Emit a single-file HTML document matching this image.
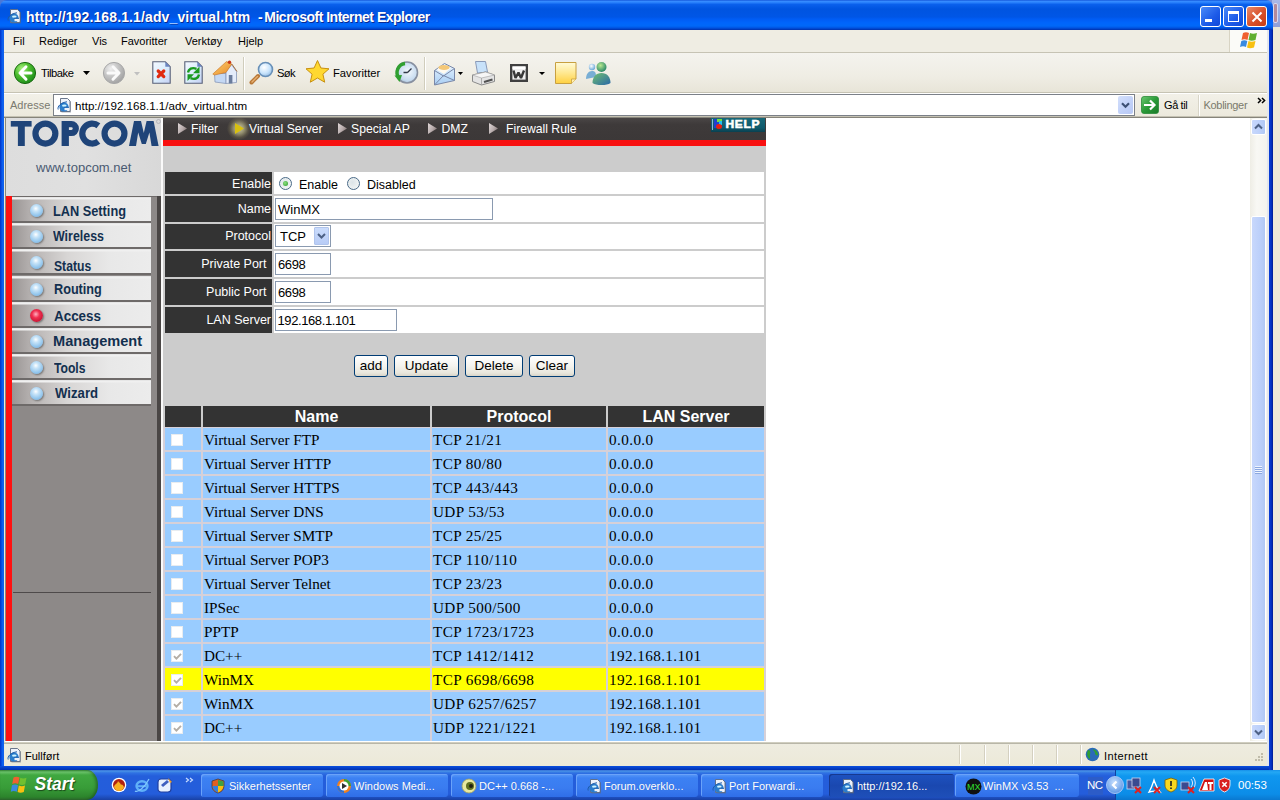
<!DOCTYPE html>
<html><head><meta charset="utf-8">
<style>
*{box-sizing:border-box}
html,body{margin:0;padding:0;width:1280px;height:800px;overflow:hidden;background:#ece9d8;font-family:"Liberation Sans",sans-serif}
.a{position:absolute}
.t{position:absolute;white-space:nowrap}

.d{font-family:"Liberation Serif",serif;font-size:15.2px;color:#000}
.mb{font-size:15.5px;line-height:16px;font-weight:bold;color:#13304f;transform-origin:0 0}
.nav{top:121.8px;font-size:12.2px;color:#fff}
.lab{left:165px;width:107px;background:#333;color:#fff;font-size:12.5px;text-align:right;padding-right:1px}
.cell{left:274px;width:490px;background:#fff}
.ft{font-size:12.5px;color:#000}
.it{font-size:13px;color:#000}
.inp{background:#fff;border:1px solid #8a9ab0}
.btn{height:22px;border:1px solid #003c74;border-radius:3px;background:linear-gradient(#fff,#f4f3ee 50%,#e8e6dc 85%,#d8d4c8);font-size:13.5px;text-align:center;line-height:20px;color:#000}
.th{height:21px;background:#333;color:#fff;font-weight:bold;font-size:16px;text-align:center;line-height:22px}
.sb{border:1px solid #fff;border-radius:2px;background:linear-gradient(90deg,#c8d8fc,#bcd0fa 60%,#b0c8f4)}
</style></head><body>
<!-- window sliver behind at right -->
<div class="a" style="left:0;top:0;width:12px;height:12px;background:#4a78d8"></div><div class="a" style="left:1262px;top:0;width:12px;height:12px;background:#7e90d8"></div>
<div class="a" style="left:1272px;top:0;width:8px;height:27px;background:linear-gradient(#aab8e8,#8f9fd8)"></div>
<div class="a" style="left:1273px;top:3px;width:5px;height:20px;background:#b48a9c;border-radius:2px;border:1px solid #d8d8f0"></div>
<div class="a" style="left:1272px;top:27px;width:8px;height:743px;background:#ece9d8"></div>

<!-- title bar -->
<div class="a" style="left:0;top:0;width:1273px;height:30px;border-radius:7px 7px 0 0;background:linear-gradient(#0846d0 0px,#3a8eff 1px,#3088ff 2px,#0a60ec 4.5px,#0054e0 9px,#0056e6 17px,#005cf4 19px,#0066fc 23px,#0068f8 26px,#0052e0 28px,#0038b8 29.5px,#0038b8 30px)"></div>
<!-- window frame -->
<div class="a" style="left:0;top:30px;width:4px;height:740px;background:linear-gradient(90deg,#0032c8,#0a5fef 60%,#1660e8)"></div>

<div class="a" style="left:0;top:766px;width:1273px;height:4px;background:linear-gradient(#0a50e0,#0030b0)"></div>


<div id="title">
<!-- IE page icon -->
<svg class="a" style="left:6px;top:8px" width="16" height="16" viewBox="0 0 16 16">
<path d="M5.5 2.5h7l2.5 2.5v10.5h-9.5z" fill="#606878" opacity=".5"/>
<path d="M4.5 1.5h7l2.5 2.5v10.5h-9.5z" fill="#eef2fa" stroke="#5a6880" stroke-width="0.9"/>
<circle cx="8" cy="10" r="4.6" fill="#2a7ccc"/>
<ellipse cx="8.3" cy="8.7" rx="2.3" ry="1.1" fill="#d0f4ff"/>
<path d="M8.5 10.6h5v2.6h-5z" fill="#eef2fa"/>
<path d="M8 10.3h5" stroke="#1a60b0" stroke-width="1"/>
<path d="M2.2 12.5C1 9.5 5 5.5 11 4.8" fill="none" stroke="#1a5aa8" stroke-width="1"/>
</svg>
<div class="t" style="left:26px;top:8.8px;font-size:14px;font-weight:bold;color:#fff;text-shadow:1px 1px 0 #0a2a90;letter-spacing:0.12px">http://192.168.1.1/adv_virtual.htm</div>
<div class="t" style="left:258px;top:8.8px;font-size:14px;font-weight:bold;color:#fff;text-shadow:1px 1px 0 #0a2a90">-</div>
<div class="t" style="left:264.3px;top:8.8px;font-size:14px;font-weight:bold;color:#fff;text-shadow:1px 1px 0 #0a2a90;letter-spacing:-0.5px">Microsoft Internet Explorer</div>
<!-- buttons -->
<div class="a" style="left:1200px;top:6px;width:21px;height:21px;border:1px solid #fff;border-radius:3px;background:linear-gradient(135deg,#4a8af8,#1c5ae8 60%,#1048d8)"><div class="a" style="left:4px;top:12px;width:7px;height:3px;background:#fff"></div></div>
<div class="a" style="left:1223px;top:6px;width:21px;height:21px;border:1px solid #fff;border-radius:3px;background:linear-gradient(135deg,#4a8af8,#1c5ae8 60%,#1048d8)"><div class="a" style="left:4px;top:4px;width:11px;height:11px;border:1px solid #fff;border-top-width:3px"></div></div>
<div class="a" style="left:1246px;top:6px;width:21px;height:21px;border:1px solid #fff;border-radius:3px;background:linear-gradient(135deg,#e88a6a,#d8502a 55%,#c83c14)">
<svg class="a" style="left:4px;top:4px" width="12" height="12"><path d="M1.5 1.5L10.5 10.5M10.5 1.5L1.5 10.5" stroke="#fff" stroke-width="2"/></svg></div>
</div>


<div id="menubar">
<div class="a" style="left:4px;top:30px;width:1264px;height:22px;background:#efede3"></div>
<div class="a" style="left:4px;top:52px;width:1264px;height:1px;background:#c6c3b4"></div>
<div class="a" style="left:1229px;top:30px;width:1px;height:22px;background:#d8d4c4"></div>
<div class="a" style="left:1230px;top:30px;width:38px;height:22px;background:#fbfbf8"></div>
<svg class="a" style="left:1239px;top:31px" width="22" height="19" viewBox="0 0 22 19">
<path d="M4 2c2-1 4-1 6 0l-1.5 7c-2-1-4-1-6 0z" fill="#f06030"/>
<path d="M11 2c2 1 4 1 7 0l-1.5 7c-3 1-5 1-7 0z" fill="#60b030"/>
<path d="M2.3 10c2-1 4-1 6 0L7 16c-2-1-4-1-6 0z" fill="#3a8ae0"/>
<path d="M9.5 10c2 1 4 1 7 0L15 16.5c-3 1-5 1-7 0z" fill="#f8c010"/>
</svg>
<div class="t" style="left:13px;top:34.5px;font-size:11px;color:#000">Fil</div>
<div class="t" style="left:39px;top:34.5px;font-size:11px;color:#000">Rediger</div>
<div class="t" style="left:92px;top:34.5px;font-size:11px;color:#000">Vis</div>
<div class="t" style="left:121px;top:34.5px;font-size:11px;color:#000">Favoritter</div>
<div class="t" style="left:185px;top:34.5px;font-size:11px;color:#000">Verktøy</div>
<div class="t" style="left:238px;top:34.5px;font-size:11px;color:#000">Hjelp</div>
</div>


<div id="toolbar">
<div class="a" style="left:4px;top:53px;width:1264px;height:39px;background:linear-gradient(#f4f3ee,#efede4 60%,#e8e5d8)"></div>
<div class="a" style="left:4px;top:92px;width:1264px;height:1px;background:#c6c3b4"></div>
<div class="a" style="left:4px;top:93px;width:1264px;height:1px;background:#fff"></div>
<!-- back -->
<svg class="a" style="left:12px;top:61px" width="26" height="25" viewBox="0 0 26 25">
<defs><radialGradient id="gb" cx="35%" cy="30%" r="75%"><stop offset="0" stop-color="#a8f080"/><stop offset="0.45" stop-color="#50c030"/><stop offset="1" stop-color="#1a8a18"/></radialGradient></defs>
<circle cx="13" cy="12" r="10.6" fill="url(#gb)" stroke="#1a6a10" stroke-width="1"/>
<path d="M14 5.8L8 12l6 6.2M8.5 12H19" fill="none" stroke="#fff" stroke-width="3" stroke-linecap="round" stroke-linejoin="round"/>
</svg>
<div class="t" style="left:41px;top:67px;font-size:11.2px;color:#000;letter-spacing:-0.45px">Tilbake</div>
<svg class="a" style="left:83px;top:71px" width="7" height="4"><path d="M0 0h7L3.5 4z" fill="#000"/></svg>
<!-- forward -->
<svg class="a" style="left:102px;top:61px" width="26" height="25" viewBox="0 0 26 25">
<defs><radialGradient id="gf" cx="35%" cy="30%" r="75%"><stop offset="0" stop-color="#f0f0f0"/><stop offset="0.5" stop-color="#c4c4c4"/><stop offset="1" stop-color="#a0a0a0"/></radialGradient></defs>
<circle cx="12" cy="12" r="10.6" fill="url(#gf)" stroke="#a8a8a8" stroke-width="1"/>
<path d="M11 5.8L17 12l-6 6.2M16.5 12H6" fill="none" stroke="#fafafa" stroke-width="3" stroke-linecap="round" stroke-linejoin="round"/>
</svg>
<svg class="a" style="left:134px;top:72px" width="6" height="4"><path d="M0 0h6L3 3.5z" fill="#c0c0c0"/></svg>
<!-- stop -->
<svg class="a" style="left:151px;top:60px" width="21" height="25" viewBox="0 0 21 25">
<defs><linearGradient id="pg" x1="0" y1="0" x2="1" y2="1"><stop offset="0" stop-color="#f4f8ff"/><stop offset="0.5" stop-color="#dceefc"/><stop offset="1" stop-color="#c4d0f4"/></linearGradient></defs>
<path d="M1.8 1.8h12.5l4.9 4.9v16.5H1.8z" fill="url(#pg)" stroke="#586078" stroke-width="1.1"/>
<path d="M14.3 1.8l4.9 4.9h-4.9z" fill="#6a84c0"/>
<path d="M7.2 11l5.6 5.6M12.8 11l-5.6 5.6" stroke="#e02a10" stroke-width="3.2" stroke-linecap="round"/>
</svg>
<!-- refresh -->
<svg class="a" style="left:183px;top:60px" width="21" height="25" viewBox="0 0 21 25">
<path d="M1.8 1.8h12.5l4.9 4.9v16.5H1.8z" fill="url(#pg)" stroke="#586078" stroke-width="1.1"/>
<path d="M14.3 1.8l4.9 4.9h-4.9z" fill="#6a84c0"/>
<path d="M5 12.5C5.5 9 9 7 13.5 8.8" fill="none" stroke="#1a9a20" stroke-width="2.4"/><path d="M16.5 6.5v6.8h-6.5z" fill="#1a9a20"/>
<path d="M16 14.5c-.5 3.5-4 5.5-8.5 3.7" fill="none" stroke="#1a9a20" stroke-width="2.4"/><path d="M4.5 21v-6.8H11z" fill="#1a9a20"/>
</svg>
<!-- home -->
<svg class="a" style="left:212px;top:59px" width="26" height="26" viewBox="0 0 26 26">
<defs><linearGradient id="rf" x1="0" y1="0" x2="1" y2="1"><stop offset="0" stop-color="#fcd070"/><stop offset="1" stop-color="#e88a28"/></linearGradient></defs>
<path d="M2.5 14.5L14 14.5L14 24.5L3 23z" fill="#c4d8f4" stroke="#8898b8" stroke-width="0.8"/>
<path d="M14 24.5V12.5L19.5 5.5 24.5 12.5V23.5z" fill="#e4ecfa" stroke="#8898b8" stroke-width="0.8"/>
<path d="M0.8 15L14.5 2.5 19.8 5 14 13.5 2.5 16z" fill="url(#rf)" stroke="#c87020" stroke-width="0.6"/>
<path d="M19.8 5L25 12.5" stroke="#a87040" stroke-width="1"/>
<rect x="16.8" y="16" width="3.6" height="8.5" fill="#6a7c9c"/>
<circle cx="17.5" cy="3.2" r="1.7" fill="#c83818"/>
</svg>
<div class="a" style="left:243px;top:57px;width:1px;height:33px;background:#d0cdbc"></div>
<div class="a" style="left:244px;top:57px;width:1px;height:33px;background:#fff"></div>
<!-- search -->
<svg class="a" style="left:248px;top:60px" width="26" height="26" viewBox="0 0 26 26">
<defs><radialGradient id="ls" cx="40%" cy="35%" r="70%"><stop offset="0" stop-color="#ffffff"/><stop offset="0.6" stop-color="#c8e4fc"/><stop offset="1" stop-color="#90b8e0"/></radialGradient></defs>
<path d="M10 16L3.5 22.5" stroke="#b87838" stroke-width="4" stroke-linecap="round"/>
<path d="M9.5 16.5L4 22" stroke="#e8b070" stroke-width="1.4" stroke-linecap="round"/>
<circle cx="17.5" cy="9.5" r="7" fill="url(#ls)" stroke="#6890b8" stroke-width="1.6"/>
</svg>
<div class="t" style="left:277px;top:67px;font-size:11.2px;color:#000;letter-spacing:-0.6px">Søk</div>
<!-- star -->
<svg class="a" style="left:304px;top:59px" width="27" height="27" viewBox="0 0 27 27">
<path d="M13.5 1.5l3.4 7.5 8.1.8-6.1 5.4 1.8 8-7.2-4.2-7.2 4.2 1.8-8-6.1-5.4 8.1-.8z" fill="#ffd830" stroke="#c89010" stroke-width="1"/>
</svg>
<div class="t" style="left:333px;top:67px;font-size:11.2px;color:#000">Favoritter</div>
<!-- history -->
<svg class="a" style="left:393px;top:60px" width="26" height="26" viewBox="0 0 26 26">
<defs><radialGradient id="gh" cx="55%" cy="45%" r="60%"><stop offset="0" stop-color="#f4f8fc"/><stop offset="0.7" stop-color="#c8dcf0"/><stop offset="1" stop-color="#a0b8d0"/></radialGradient></defs>
<circle cx="14" cy="12.5" r="10.5" fill="url(#gh)" stroke="#8890a0" stroke-width="1.6"/>
<path d="M14.5 12.5l4-4M14.5 12.5h-4" stroke="#303848" stroke-width="1.3"/>
<path d="M12 3.5A9 9 0 0 0 6 18" fill="none" stroke="#30a030" stroke-width="3.4"/>
<path d="M1.5 15.5L9 15l-2.5 7z" fill="#30a030"/>
</svg>
<div class="a" style="left:424px;top:57px;width:1px;height:33px;background:#d0cdbc"></div>
<div class="a" style="left:425px;top:57px;width:1px;height:33px;background:#fff"></div>
<!-- mail -->
<svg class="a" style="left:433px;top:61px" width="24" height="25" viewBox="0 0 24 25">
<defs><linearGradient id="mg" x1="0" y1="0" x2="0" y2="1"><stop offset="0" stop-color="#e8f4ff"/><stop offset="1" stop-color="#a8cef4"/></linearGradient></defs>
<path d="M1.5 9.5L11.5 2.5 21.5 7.5V19.5L1.5 24z" fill="url(#mg)" stroke="#7a88a8" stroke-width="1"/>
<path d="M4 9C6 4 13 3 18 7L11 13z" fill="#fffaf0"/>
<ellipse cx="11" cy="6.5" rx="5.5" ry="2.6" fill="#f4c878"/>
<path d="M1.5 24L10.5 14.5 21.5 19.5M1.5 9.5L10.5 15 21.5 7.5" fill="none" stroke="#7a88a8" stroke-width="1"/>
</svg>
<svg class="a" style="left:458px;top:72px" width="5" height="3"><path d="M0 0h5L2.5 3z" fill="#000"/></svg>
<!-- print -->
<svg class="a" style="left:471px;top:60px" width="25" height="26" viewBox="0 0 25 26">
<path d="M4.5 1.5h10l2 10.5-10 1z" fill="#c8e2fa" stroke="#8a9ab8" stroke-width="1"/>
<path d="M1.5 15L14.5 12 23.5 15V21.5L10.5 25 1.5 21.5z" fill="#e4e4e4" stroke="#8a8a8a" stroke-width="1"/>
<path d="M1.5 15L14.5 12 23.5 15 10.5 18z" fill="#f6f6f6" stroke="#a0a0a0" stroke-width="0.6"/>
<path d="M10.5 18V25" stroke="#a0a0a0" stroke-width="0.8"/>
<path d="M13 22L21.5 19.5" stroke="#505050" stroke-width="2"/>
</svg>
<!-- word -->
<svg class="a" style="left:510px;top:64px" width="18" height="18" viewBox="0 0 18 18">
<rect x="1.2" y="1.2" width="15.6" height="15.6" fill="#f0f0f0" stroke="#404040" stroke-width="2.4"/>
<rect x="2.5" y="2.5" width="13" height="2.5" fill="#fff"/>
<path d="M3.5 6.5l2 7.5 3-5.5 2.5 5.5 3-7.5" fill="none" stroke="#383838" stroke-width="2.4" stroke-linejoin="bevel"/>
</svg>
<svg class="a" style="left:539px;top:72px" width="6" height="3"><path d="M0 0h6L3 3z" fill="#000"/></svg>
<!-- note -->
<svg class="a" style="left:554px;top:61px" width="24" height="24" viewBox="0 0 24 24">
<defs><linearGradient id="ng" x1="0" y1="0" x2="0" y2="1"><stop offset="0" stop-color="#fffbd8"/><stop offset="0.5" stop-color="#ffe890"/><stop offset="1" stop-color="#ffd040"/></linearGradient></defs>
<path d="M1.5 1.5h20.5v16.5l-4.5 4.5H1.5z" fill="url(#ng)" stroke="#c8a040" stroke-width="1"/>
<path d="M17.5 22.5v-4.5h4.5" fill="#fff0b0" stroke="#c8a040" stroke-width="0.8"/>
</svg>
<!-- messenger -->
<svg class="a" style="left:585px;top:60px" width="27" height="26" viewBox="0 0 27 26">
<defs><radialGradient id="mh1" cx="40%" cy="35%" r="65%"><stop offset="0" stop-color="#ffffff"/><stop offset="1" stop-color="#6aa8d8"/></radialGradient>
<radialGradient id="mh2" cx="40%" cy="35%" r="65%"><stop offset="0" stop-color="#b8e890"/><stop offset="1" stop-color="#2a8868"/></radialGradient>
<linearGradient id="mb2" x1="0" y1="0" x2="1" y2="1"><stop offset="0" stop-color="#70c070"/><stop offset="1" stop-color="#2a68a8"/></linearGradient></defs>
<circle cx="7" cy="7" r="3.2" fill="url(#mh1)"/>
<path d="M1 19c0-5 2.5-8 6-8s4 2 4 6z" fill="#78aed4"/>
<circle cx="16.5" cy="7" r="5" fill="url(#mh2)"/>
<path d="M7.5 23c0-6 3.5-10 9-10s9 4 9 10c-2 1.5-5 2-9 2s-7-.5-9-2z" fill="url(#mb2)"/>
</svg>
</div>


<div id="addr">
<div class="a" style="left:4px;top:94px;width:1264px;height:23px;background:linear-gradient(#f2f0e8,#ece9dc)"></div>
<div class="t" style="left:10px;top:99px;font-size:11px;color:#7a7a70">Adresse</div>
<div class="a" style="left:53px;top:94px;width:1082px;height:22px;background:#fff;border:1px solid #7b8088"></div>
<svg class="a" style="left:56px;top:97px" width="16" height="16" viewBox="0 0 16 16">
<path d="M5.5 2.5h7l2.5 2.5v10.5h-9.5z" fill="#606878" opacity=".5"/>
<path d="M4.5 1.5h7l2.5 2.5v10.5h-9.5z" fill="#eef2fa" stroke="#5a6880" stroke-width="0.9"/>
<circle cx="8" cy="10" r="4.6" fill="#2a7ccc"/>
<ellipse cx="8.3" cy="8.7" rx="2.3" ry="1.1" fill="#d0f4ff"/>
<path d="M8.5 10.6h5v2.6h-5z" fill="#eef2fa"/>
<path d="M8 10.3h5" stroke="#1a60b0" stroke-width="1"/>
<path d="M2.2 12.5C1 9.5 5 5.5 11 4.8" fill="none" stroke="#1a5aa8" stroke-width="1"/>
</svg>
<div class="t" style="left:75px;top:99px;font-size:11.6px;color:#000">http://192.168.1.1/adv_virtual.htm</div>
<div class="a" style="left:1118px;top:96px;width:15px;height:18px;border-radius:2px;background:linear-gradient(135deg,#d4e0fc,#c0d0f8 60%,#b8c8f4)"></div>
<svg class="a" style="left:1121px;top:102px" width="9" height="7"><path d="M1 1.2l3.5 3.5L8 1.2" fill="none" stroke="#3d5075" stroke-width="2.2"/></svg>
<!-- go -->
<svg class="a" style="left:1141px;top:96px" width="18" height="18" viewBox="0 0 18 18">
<defs><linearGradient id="gg" x1="0" y1="0" x2="1" y2="1"><stop offset="0" stop-color="#6ac870"/><stop offset="0.5" stop-color="#2a9a38"/><stop offset="1" stop-color="#1a7a28"/></linearGradient></defs>
<rect x="0.5" y="0.5" width="17" height="17" rx="2.5" fill="url(#gg)" stroke="#2a8a38" stroke-width="0.8"/>
<path d="M3 9h10M9 4.5L13.5 9 9 13.5" fill="none" stroke="#fff" stroke-width="2.2"/>
</svg>
<div class="t" style="left:1164px;top:98.5px;font-size:11px;color:#000;letter-spacing:-0.4px">Gå til</div>
<div class="a" style="left:1198px;top:95px;width:1px;height:21px;background:#d8d5c8"></div>
<div class="a" style="left:1199px;top:95px;width:1px;height:21px;background:#fff"></div>
<div class="t" style="left:1203.5px;top:98.5px;font-size:11px;color:#7a7a6c;letter-spacing:-0.3px">Koblinger</div>
<svg class="a" style="left:1257px;top:97px" width="9" height="7"><path d="M1 1l2.6 2.5L1 6M5 1l2.6 2.5L5 6" fill="none" stroke="#000" stroke-width="1.5"/></svg>
</div>


<div id="content">
<div class="a" style="left:4px;top:116px;width:1264px;height:1px;background:#c4c1b2"></div><div class="a" style="left:4px;top:117px;width:1264px;height:1px;background:#86847a"></div>
<div class="a" style="left:5px;top:117px;width:1px;height:625px;background:#8a887c"></div>
<div class="a" style="left:6px;top:118px;width:1244px;height:623px;background:#fff"></div>
<div class="a" style="left:5px;top:741px;width:1263px;height:1px;background:#fff"></div>
<!-- left panel -->
<div class="a" style="left:6px;top:118px;width:157px;height:78px;background:linear-gradient(90deg,#dddddd,#e0e0e0 50%,#d8d8d8)"></div>
<svg class="a" style="left:0;top:116px" width="166" height="36" viewBox="0 0 166 36">
<g fill="#1f4479">
<rect x="10.8" y="5" width="20.8" height="5.6"/><rect x="17.9" y="5" width="6.9" height="25"/>
<rect x="61.6" y="5" width="7.3" height="25"/>
<path d="M129,30 L134,5 L141,5 L143.8,17 L146.6,5 L153.6,5 L158.6,30 L151.6,30 L149.4,16.5 L145.8,28 L141.8,28 L138.2,16.5 L136,30 Z"/>
</g>
<g fill="none" stroke="#1f4479" stroke-width="6.2">
<circle cx="45.4" cy="17.6" r="9.95"/>
<circle cx="114.5" cy="17.6" r="9.95"/>
<path d="M65,8.1 H71.4 A4.45,4.45 0 0 1 71.4,17 H65"/>
<path d="M98.4,9.8 A9.95,9.95 0 1 0 98.4,25.4"/>
</g>
<circle cx="158.5" cy="5.5" r="2" fill="none" stroke="#a8a8b0" stroke-width="0.7"/>
</svg>
<div class="t" style="left:36px;top:160px;font-size:13px;color:#4a5a72">www.topcom.net</div>
<div class="a" style="left:6px;top:196px;width:157px;height:545px;background:#8d8988"></div>
<div class="a" style="left:6px;top:196px;width:6px;height:545px;background:#ff1010"></div>
<div class="a" style="left:12px;top:196px;width:145px;height:1px;background:#6e6a69"></div>
<div class="a" style="left:157px;top:196px;width:4px;height:545px;background:#4a4645"></div>
<div class="a" style="left:161px;top:118px;width:2px;height:623px;background:#fafafa"></div>
<div class="a" style="left:13px;top:591.5px;width:138px;height:1.5px;background:#4e4a4a"></div>
<div class="a" style="left:12px;top:197.0px;width:139px;height:26px;background:linear-gradient(#dcdcdc 0,#f0f0f0 1px,#f0f0f0 2px,rgba(0,0,0,0) 3px),linear-gradient(90deg,#9a9594 0,#b8b4b3 15%,#d8d6d5 40%,#e8e8e8 70%,#ececec 100%);border-bottom:2px solid #6e6a69"></div>
<div class="a" style="left:30px;top:204.0px;width:13px;height:13px;border-radius:50%;background:radial-gradient(circle at 45% 35%,#ffffff 0,#c8e4f8 25%,#90c4ec 65%,#6aa0d0 100%);box-shadow:1px 1px 2px rgba(60,60,60,.6)"></div>
<div class="t mb" style="left:53.0px;top:202.6px;transform:scaleX(0.823)">LAN Setting</div>
<div class="a" style="left:12px;top:223.2px;width:139px;height:26px;background:linear-gradient(#dcdcdc 0,#f0f0f0 1px,#f0f0f0 2px,rgba(0,0,0,0) 3px),linear-gradient(90deg,#9a9594 0,#b8b4b3 15%,#d8d6d5 40%,#e8e8e8 70%,#ececec 100%);border-bottom:2px solid #6e6a69"></div>
<div class="a" style="left:30px;top:230.2px;width:13px;height:13px;border-radius:50%;background:radial-gradient(circle at 45% 35%,#ffffff 0,#c8e4f8 25%,#90c4ec 65%,#6aa0d0 100%);box-shadow:1px 1px 2px rgba(60,60,60,.6)"></div>
<div class="t mb" style="left:52.6px;top:228.2px;transform:scaleX(0.802)">Wireless</div>
<div class="a" style="left:12px;top:249.4px;width:139px;height:26px;background:linear-gradient(#dcdcdc 0,#f0f0f0 1px,#f0f0f0 2px,rgba(0,0,0,0) 3px),linear-gradient(90deg,#9a9594 0,#b8b4b3 15%,#d8d6d5 40%,#e8e8e8 70%,#ececec 100%);border-bottom:2px solid #6e6a69"></div>
<div class="a" style="left:30px;top:256.4px;width:13px;height:13px;border-radius:50%;background:radial-gradient(circle at 45% 35%,#ffffff 0,#c8e4f8 25%,#90c4ec 65%,#6aa0d0 100%);box-shadow:1px 1px 2px rgba(60,60,60,.6)"></div>
<div class="t mb" style="left:53.7px;top:257.5px;transform:scaleX(0.785)">Status</div>
<div class="a" style="left:12px;top:275.6px;width:139px;height:26px;background:linear-gradient(#dcdcdc 0,#f0f0f0 1px,#f0f0f0 2px,rgba(0,0,0,0) 3px),linear-gradient(90deg,#9a9594 0,#b8b4b3 15%,#d8d6d5 40%,#e8e8e8 70%,#ececec 100%);border-bottom:2px solid #6e6a69"></div>
<div class="a" style="left:30px;top:282.6px;width:13px;height:13px;border-radius:50%;background:radial-gradient(circle at 45% 35%,#ffffff 0,#c8e4f8 25%,#90c4ec 65%,#6aa0d0 100%);box-shadow:1px 1px 2px rgba(60,60,60,.6)"></div>
<div class="t mb" style="left:53.7px;top:281.3px;transform:scaleX(0.817)">Routing</div>
<div class="a" style="left:12px;top:301.8px;width:139px;height:26px;background:linear-gradient(#dcdcdc 0,#f0f0f0 1px,#f0f0f0 2px,rgba(0,0,0,0) 3px),linear-gradient(90deg,#9a9594 0,#b8b4b3 15%,#d8d6d5 40%,#e8e8e8 70%,#ececec 100%);border-bottom:2px solid #6e6a69"></div>
<div class="a" style="left:30px;top:308.8px;width:13px;height:13px;border-radius:50%;background:radial-gradient(circle at 45% 40%,#ffb0c0 0,#f03050 35%,#c01030 80%,#a01020 100%);box-shadow:1px 1px 2px rgba(60,60,60,.6)"></div>
<div class="t mb" style="left:54.1px;top:308.3px;transform:scaleX(0.866)">Access</div>
<div class="a" style="left:12px;top:328.0px;width:139px;height:26px;background:linear-gradient(#dcdcdc 0,#f0f0f0 1px,#f0f0f0 2px,rgba(0,0,0,0) 3px),linear-gradient(90deg,#9a9594 0,#b8b4b3 15%,#d8d6d5 40%,#e8e8e8 70%,#ececec 100%);border-bottom:2px solid #6e6a69"></div>
<div class="a" style="left:30px;top:335.0px;width:13px;height:13px;border-radius:50%;background:radial-gradient(circle at 45% 35%,#ffffff 0,#c8e4f8 25%,#90c4ec 65%,#6aa0d0 100%);box-shadow:1px 1px 2px rgba(60,60,60,.6)"></div>
<div class="t mb" style="left:53.3px;top:333.2px;transform:scaleX(0.940)">Management</div>
<div class="a" style="left:12px;top:354.2px;width:139px;height:26px;background:linear-gradient(#dcdcdc 0,#f0f0f0 1px,#f0f0f0 2px,rgba(0,0,0,0) 3px),linear-gradient(90deg,#9a9594 0,#b8b4b3 15%,#d8d6d5 40%,#e8e8e8 70%,#ececec 100%);border-bottom:2px solid #6e6a69"></div>
<div class="a" style="left:30px;top:361.2px;width:13px;height:13px;border-radius:50%;background:radial-gradient(circle at 45% 35%,#ffffff 0,#c8e4f8 25%,#90c4ec 65%,#6aa0d0 100%);box-shadow:1px 1px 2px rgba(60,60,60,.6)"></div>
<div class="t mb" style="left:53.7px;top:360.1px;transform:scaleX(0.784)">Tools</div>
<div class="a" style="left:12px;top:380.4px;width:139px;height:26px;background:linear-gradient(#dcdcdc 0,#f0f0f0 1px,#f0f0f0 2px,rgba(0,0,0,0) 3px),linear-gradient(90deg,#9a9594 0,#b8b4b3 15%,#d8d6d5 40%,#e8e8e8 70%,#ececec 100%);border-bottom:2px solid #6e6a69"></div>
<div class="a" style="left:30px;top:387.4px;width:13px;height:13px;border-radius:50%;background:radial-gradient(circle at 45% 35%,#ffffff 0,#c8e4f8 25%,#90c4ec 65%,#6aa0d0 100%);box-shadow:1px 1px 2px rgba(60,60,60,.6)"></div>
<div class="t mb" style="left:54.8px;top:385.0px;transform:scaleX(0.850)">Wizard</div>

<!-- main area -->
<div class="a" style="left:163px;top:118px;width:603px;height:623px;background:#cccccc"></div>
<div class="a" style="left:163px;top:118px;width:603px;height:22px;background:linear-gradient(#4a4646,#3e3a3a 30%,#3c3838)"></div>
<div class="a" style="left:163px;top:140px;width:603px;height:6px;background:#f81010"></div>

<svg class="a" style="left:177px;top:122px" width="11" height="13"><defs><linearGradient id="tg" x1="0" y1="0" x2="1" y2="0.6"><stop offset="0" stop-color="#e0d8d8"/><stop offset="0.6" stop-color="#b8acac"/><stop offset="1" stop-color="#8a7c7c"/></linearGradient></defs><path d="M1 1l9 5.5L1 12z" fill="url(#tg)"/></svg>
<div class="t nav" style="left:191px">Filter</div>
<div class="a" style="left:227px;top:117px;width:24px;height:23px;border-radius:50%;background:radial-gradient(ellipse at 50% 50%,rgba(255,255,210,.75) 0,rgba(240,235,170,.5) 30%,rgba(160,150,100,.25) 55%,rgba(60,60,60,0) 72%)"></div>
<svg class="a" style="left:234px;top:122px" width="11" height="13"><path d="M1 1l9 5.5L1 12z" fill="#d8c010"/></svg>
<div class="t nav" style="left:249px">Virtual Server</div>
<svg class="a" style="left:337px;top:122px" width="11" height="13"><path d="M1 1l9 5.5L1 12z" fill="url(#tg)"/></svg>
<div class="t nav" style="left:351px">Special AP</div>
<svg class="a" style="left:427px;top:122px" width="11" height="13"><path d="M1 1l9 5.5L1 12z" fill="url(#tg)"/></svg>
<div class="t nav" style="left:441.5px">DMZ</div>
<svg class="a" style="left:488px;top:122px" width="11" height="13"><path d="M1 1l9 5.5L1 12z" fill="url(#tg)"/></svg>
<div class="t nav" style="left:506px">Firewall Rule</div>
<div class="a" style="left:711px;top:118px;width:54px;height:14px;background:linear-gradient(#186878,#0e5a6c 70%,#0a4050)"></div>
<div class="a" style="left:712px;top:119px;width:1px;height:11px;background:#8ab8d8"></div>
<div class="a" style="left:714px;top:119px;width:6px;height:9px;background:#2040d0"></div>
<div class="a" style="left:717px;top:118.5px;width:5px;height:3px;background:#70e040"></div>
<div class="a" style="left:719px;top:121px;width:3px;height:4px;background:#20c0f0"></div>
<div class="a" style="left:716px;top:124px;width:6px;height:5px;border-radius:50%;background:#e82010"></div>
<div class="t" style="left:725.5px;top:117.2px;font-size:12px;font-weight:bold;color:#fff;letter-spacing:0.7px;-webkit-text-stroke:0.6px #fff;transform:scaleY(0.95)">HELP</div>

<!-- form -->
<div class="a lab" style="top:172px;height:22px;line-height:24px">Enable</div>
<div class="a cell" style="top:172px;height:22px"></div>
<div class="a lab" style="top:196px;height:26px;line-height:26px">Name</div>
<div class="a cell" style="top:196px;height:26px"></div>
<div class="a lab" style="top:224px;height:25px;line-height:25px">Protocol</div>
<div class="a cell" style="top:224px;height:25px"></div>
<div class="a lab" style="top:251px;height:26px;line-height:26px;padding-right:5.5px">Private Port</div>
<div class="a cell" style="top:251px;height:26px"></div>
<div class="a lab" style="top:279px;height:26px;line-height:26px;padding-right:5.5px">Public Port</div>
<div class="a cell" style="top:279px;height:26px"></div>
<div class="a lab" style="top:307px;height:26px;line-height:26px">LAN Server</div>
<div class="a cell" style="top:307px;height:26px"></div>
<!-- radios -->
<div class="a" style="left:279px;top:177px;width:13px;height:13px;border-radius:50%;border:1px solid #4a6a88;background:radial-gradient(circle at 40% 40%,#dce4e8,#f8faf8)"><div class="a" style="left:3px;top:3px;width:5px;height:5px;border-radius:50%;background:radial-gradient(circle at 40% 40%,#8ce080,#2a9a28)"></div></div>
<div class="t ft" style="left:299px;top:177.5px">Enable</div>
<div class="a" style="left:347px;top:177px;width:13px;height:13px;border-radius:50%;border:1px solid #4a6a88;background:radial-gradient(circle at 40% 40%,#dce4e8,#f8faf8)"></div>
<div class="t ft" style="left:367px;top:177.5px">Disabled</div>
<div class="a inp" style="left:275px;top:198px;width:218px;height:22px"></div>
<div class="t it" style="left:278px;top:202px">WinMX</div>
<div class="a inp" style="left:275px;top:225px;width:56px;height:22px"></div>
<div class="t it" style="left:280px;top:229px">TCP</div>
<div class="a" style="left:314px;top:227px;width:15px;height:18px;border-radius:1px;background:linear-gradient(#cadcfc,#b8ccf6);border:1px solid #b0c4ec"></div>
<svg class="a" style="left:317px;top:233px" width="9" height="6"><path d="M1 1l3.5 3.5L8 1" fill="none" stroke="#4d6185" stroke-width="2"/></svg>
<div class="a inp" style="left:275px;top:253px;width:56px;height:22px"></div>
<div class="t it" style="left:278px;top:257px;letter-spacing:-0.4px">6698</div>
<div class="a inp" style="left:275px;top:281px;width:56px;height:22px"></div>
<div class="t it" style="left:278px;top:285px;letter-spacing:-0.4px">6698</div>
<div class="a inp" style="left:275px;top:309px;width:122px;height:22px"></div>
<div class="t it" style="left:277.5px;top:313px;letter-spacing:-0.4px">192.168.1.101</div>
<!-- buttons -->
<div class="a btn" style="left:354px;top:355px;width:34px">add</div>
<div class="a btn" style="left:394px;top:355px;width:65px">Update</div>
<div class="a btn" style="left:465px;top:355px;width:58px">Delete</div>
<div class="a btn" style="left:529px;top:355px;width:46px">Clear</div>

<!-- list table header -->
<div class="a" style="left:165px;top:406px;width:36px;height:21px;background:#333"></div>
<div class="a th" style="left:203px;top:406px;width:227px">Name</div>
<div class="a th" style="left:432px;top:406px;width:174px">Protocol</div>
<div class="a th" style="left:608px;top:406px;width:156px">LAN Server</div>
<div class="a" style="left:163px;top:427px;width:603px;height:314px;background:#d6d0d8"></div>
<div class="a" style="left:165px;top:428px;width:36px;height:22px;background:#99ccff"><div class="a" style="left:6px;top:6px;width:12px;height:12px;background:#fff;border:1px solid #e8ecf0"></div></div>
<div class="a" style="left:203px;top:428px;width:227px;height:22px;background:#99ccff"></div><div class="t d" style="left:204px;top:431px">Virtual Server FTP</div>
<div class="a" style="left:432px;top:428px;width:174px;height:22px;background:#99ccff"></div><div class="t d" style="letter-spacing:0.4px;left:433px;top:431px">TCP 21/21</div>
<div class="a" style="left:608px;top:428px;width:156px;height:22px;background:#99ccff"></div><div class="t d" style="letter-spacing:0.4px;left:609px;top:431px">0.0.0.0</div>
<div class="a" style="left:165px;top:452px;width:36px;height:22px;background:#99ccff"><div class="a" style="left:6px;top:6px;width:12px;height:12px;background:#fff;border:1px solid #e8ecf0"></div></div>
<div class="a" style="left:203px;top:452px;width:227px;height:22px;background:#99ccff"></div><div class="t d" style="left:204px;top:455px">Virtual Server HTTP</div>
<div class="a" style="left:432px;top:452px;width:174px;height:22px;background:#99ccff"></div><div class="t d" style="letter-spacing:0.4px;left:433px;top:455px">TCP 80/80</div>
<div class="a" style="left:608px;top:452px;width:156px;height:22px;background:#99ccff"></div><div class="t d" style="letter-spacing:0.4px;left:609px;top:455px">0.0.0.0</div>
<div class="a" style="left:165px;top:476px;width:36px;height:22px;background:#99ccff"><div class="a" style="left:6px;top:6px;width:12px;height:12px;background:#fff;border:1px solid #e8ecf0"></div></div>
<div class="a" style="left:203px;top:476px;width:227px;height:22px;background:#99ccff"></div><div class="t d" style="left:204px;top:479px">Virtual Server HTTPS</div>
<div class="a" style="left:432px;top:476px;width:174px;height:22px;background:#99ccff"></div><div class="t d" style="letter-spacing:0.4px;left:433px;top:479px">TCP 443/443</div>
<div class="a" style="left:608px;top:476px;width:156px;height:22px;background:#99ccff"></div><div class="t d" style="letter-spacing:0.4px;left:609px;top:479px">0.0.0.0</div>
<div class="a" style="left:165px;top:500px;width:36px;height:22px;background:#99ccff"><div class="a" style="left:6px;top:6px;width:12px;height:12px;background:#fff;border:1px solid #e8ecf0"></div></div>
<div class="a" style="left:203px;top:500px;width:227px;height:22px;background:#99ccff"></div><div class="t d" style="left:204px;top:503px">Virtual Server DNS</div>
<div class="a" style="left:432px;top:500px;width:174px;height:22px;background:#99ccff"></div><div class="t d" style="letter-spacing:0.4px;left:433px;top:503px">UDP 53/53</div>
<div class="a" style="left:608px;top:500px;width:156px;height:22px;background:#99ccff"></div><div class="t d" style="letter-spacing:0.4px;left:609px;top:503px">0.0.0.0</div>
<div class="a" style="left:165px;top:524px;width:36px;height:22px;background:#99ccff"><div class="a" style="left:6px;top:6px;width:12px;height:12px;background:#fff;border:1px solid #e8ecf0"></div></div>
<div class="a" style="left:203px;top:524px;width:227px;height:22px;background:#99ccff"></div><div class="t d" style="left:204px;top:527px">Virtual Server SMTP</div>
<div class="a" style="left:432px;top:524px;width:174px;height:22px;background:#99ccff"></div><div class="t d" style="letter-spacing:0.4px;left:433px;top:527px">TCP 25/25</div>
<div class="a" style="left:608px;top:524px;width:156px;height:22px;background:#99ccff"></div><div class="t d" style="letter-spacing:0.4px;left:609px;top:527px">0.0.0.0</div>
<div class="a" style="left:165px;top:548px;width:36px;height:22px;background:#99ccff"><div class="a" style="left:6px;top:6px;width:12px;height:12px;background:#fff;border:1px solid #e8ecf0"></div></div>
<div class="a" style="left:203px;top:548px;width:227px;height:22px;background:#99ccff"></div><div class="t d" style="left:204px;top:551px">Virtual Server POP3</div>
<div class="a" style="left:432px;top:548px;width:174px;height:22px;background:#99ccff"></div><div class="t d" style="letter-spacing:0.4px;left:433px;top:551px">TCP 110/110</div>
<div class="a" style="left:608px;top:548px;width:156px;height:22px;background:#99ccff"></div><div class="t d" style="letter-spacing:0.4px;left:609px;top:551px">0.0.0.0</div>
<div class="a" style="left:165px;top:572px;width:36px;height:22px;background:#99ccff"><div class="a" style="left:6px;top:6px;width:12px;height:12px;background:#fff;border:1px solid #e8ecf0"></div></div>
<div class="a" style="left:203px;top:572px;width:227px;height:22px;background:#99ccff"></div><div class="t d" style="left:204px;top:575px">Virtual Server Telnet</div>
<div class="a" style="left:432px;top:572px;width:174px;height:22px;background:#99ccff"></div><div class="t d" style="letter-spacing:0.4px;left:433px;top:575px">TCP 23/23</div>
<div class="a" style="left:608px;top:572px;width:156px;height:22px;background:#99ccff"></div><div class="t d" style="letter-spacing:0.4px;left:609px;top:575px">0.0.0.0</div>
<div class="a" style="left:165px;top:596px;width:36px;height:22px;background:#99ccff"><div class="a" style="left:6px;top:6px;width:12px;height:12px;background:#fff;border:1px solid #e8ecf0"></div></div>
<div class="a" style="left:203px;top:596px;width:227px;height:22px;background:#99ccff"></div><div class="t d" style="left:204px;top:599px">IPSec</div>
<div class="a" style="left:432px;top:596px;width:174px;height:22px;background:#99ccff"></div><div class="t d" style="letter-spacing:0.4px;left:433px;top:599px">UDP 500/500</div>
<div class="a" style="left:608px;top:596px;width:156px;height:22px;background:#99ccff"></div><div class="t d" style="letter-spacing:0.4px;left:609px;top:599px">0.0.0.0</div>
<div class="a" style="left:165px;top:620px;width:36px;height:22px;background:#99ccff"><div class="a" style="left:6px;top:6px;width:12px;height:12px;background:#fff;border:1px solid #e8ecf0"></div></div>
<div class="a" style="left:203px;top:620px;width:227px;height:22px;background:#99ccff"></div><div class="t d" style="left:204px;top:623px">PPTP</div>
<div class="a" style="left:432px;top:620px;width:174px;height:22px;background:#99ccff"></div><div class="t d" style="letter-spacing:0.4px;left:433px;top:623px">TCP 1723/1723</div>
<div class="a" style="left:608px;top:620px;width:156px;height:22px;background:#99ccff"></div><div class="t d" style="letter-spacing:0.4px;left:609px;top:623px">0.0.0.0</div>
<div class="a" style="left:165px;top:644px;width:36px;height:22px;background:#99ccff"><div class="a" style="left:6px;top:6px;width:12px;height:12px;background:#fff;border:1px solid #e8ecf0"><svg class="a" style="left:0px;top:0px" width="11" height="11"><path d="M2 5.2L4.4 7.6L9 2.8" fill="none" stroke="#b4aea6" stroke-width="1.9"/></svg></div></div>
<div class="a" style="left:203px;top:644px;width:227px;height:22px;background:#99ccff"></div><div class="t d" style="left:204px;top:647px">DC++</div>
<div class="a" style="left:432px;top:644px;width:174px;height:22px;background:#99ccff"></div><div class="t d" style="letter-spacing:0.4px;left:433px;top:647px">TCP 1412/1412</div>
<div class="a" style="left:608px;top:644px;width:156px;height:22px;background:#99ccff"></div><div class="t d" style="letter-spacing:0.4px;left:609px;top:647px">192.168.1.101</div>
<div class="a" style="left:165px;top:668px;width:36px;height:22px;background:#ffff00"><div class="a" style="left:6px;top:6px;width:12px;height:12px;background:#fff;border:1px solid #e8ecf0"><svg class="a" style="left:0px;top:0px" width="11" height="11"><path d="M2 5.2L4.4 7.6L9 2.8" fill="none" stroke="#b4aea6" stroke-width="1.9"/></svg></div></div>
<div class="a" style="left:203px;top:668px;width:227px;height:22px;background:#ffff00"></div><div class="t d" style="left:204px;top:671px">WinMX</div>
<div class="a" style="left:432px;top:668px;width:174px;height:22px;background:#ffff00"></div><div class="t d" style="letter-spacing:0.4px;left:433px;top:671px">TCP 6698/6698</div>
<div class="a" style="left:608px;top:668px;width:156px;height:22px;background:#ffff00"></div><div class="t d" style="letter-spacing:0.4px;left:609px;top:671px">192.168.1.101</div>
<div class="a" style="left:165px;top:692px;width:36px;height:22px;background:#99ccff"><div class="a" style="left:6px;top:6px;width:12px;height:12px;background:#fff;border:1px solid #e8ecf0"><svg class="a" style="left:0px;top:0px" width="11" height="11"><path d="M2 5.2L4.4 7.6L9 2.8" fill="none" stroke="#b4aea6" stroke-width="1.9"/></svg></div></div>
<div class="a" style="left:203px;top:692px;width:227px;height:22px;background:#99ccff"></div><div class="t d" style="left:204px;top:695px">WinMX</div>
<div class="a" style="left:432px;top:692px;width:174px;height:22px;background:#99ccff"></div><div class="t d" style="letter-spacing:0.4px;left:433px;top:695px">UDP 6257/6257</div>
<div class="a" style="left:608px;top:692px;width:156px;height:22px;background:#99ccff"></div><div class="t d" style="letter-spacing:0.4px;left:609px;top:695px">192.168.1.101</div>
<div class="a" style="left:165px;top:716px;width:36px;height:25px;background:#99ccff"><div class="a" style="left:6px;top:6px;width:12px;height:12px;background:#fff;border:1px solid #e8ecf0"><svg class="a" style="left:0px;top:0px" width="11" height="11"><path d="M2 5.2L4.4 7.6L9 2.8" fill="none" stroke="#b4aea6" stroke-width="1.9"/></svg></div></div>
<div class="a" style="left:203px;top:716px;width:227px;height:25px;background:#99ccff"></div><div class="t d" style="left:204px;top:719px">DC++</div>
<div class="a" style="left:432px;top:716px;width:174px;height:25px;background:#99ccff"></div><div class="t d" style="letter-spacing:0.4px;left:433px;top:719px">UDP 1221/1221</div>
<div class="a" style="left:608px;top:716px;width:156px;height:25px;background:#99ccff"></div><div class="t d" style="letter-spacing:0.4px;left:609px;top:719px">192.168.1.101</div>
<!-- scrollbar -->
<div class="a" style="left:1250px;top:118px;width:17px;height:623px;background:linear-gradient(90deg,#eeede5,#f8f8f4 40%,#f4f3ee)"></div>
<div class="a sb" style="left:1251px;top:119px;width:15px;height:16px"></div>
<svg class="a" style="left:1254px;top:123px" width="9" height="7"><path d="M1 5.5L4.5 2 8 5.5" fill="none" stroke="#4d6185" stroke-width="2"/></svg>
<div class="a sb" style="left:1251px;top:216px;width:15px;height:507px"></div>
<div class="a" style="left:1255px;top:466px;width:7px;height:1px;background:#eef4ff;box-shadow:0 1px 0 #8ca8e0"></div>
<div class="a" style="left:1255px;top:468px;width:7px;height:1px;background:#eef4ff;box-shadow:0 1px 0 #8ca8e0"></div>
<div class="a" style="left:1255px;top:470px;width:7px;height:1px;background:#eef4ff;box-shadow:0 1px 0 #8ca8e0"></div>
<div class="a" style="left:1255px;top:472px;width:7px;height:1px;background:#eef4ff;box-shadow:0 1px 0 #8ca8e0"></div>
<div class="a sb" style="left:1251px;top:724px;width:15px;height:16px"></div>
<svg class="a" style="left:1254px;top:729px" width="9" height="7"><path d="M1 1.5L4.5 5 8 1.5" fill="none" stroke="#4d6185" stroke-width="2"/></svg>
</div>


<div id="status">
<div class="a" style="left:4px;top:742px;width:1264px;height:1px;background:#d0cec0"></div>
<div class="a" style="left:4px;top:743px;width:1264px;height:1px;background:#b8b6a8"></div><div class="a" style="left:4px;top:744px;width:1264px;height:22px;background:linear-gradient(#eeece0,#ece9d8)"></div>
<svg class="a" style="left:6px;top:747px" width="16" height="16" viewBox="0 0 16 16">
<path d="M5.5 2.5h7l2.5 2.5v10.5h-9.5z" fill="#606878" opacity=".5"/>
<path d="M4.5 1.5h7l2.5 2.5v10.5h-9.5z" fill="#eef2fa" stroke="#5a6880" stroke-width="0.9"/>
<circle cx="8" cy="10" r="4.6" fill="#2a7ccc"/>
<ellipse cx="8.3" cy="8.7" rx="2.3" ry="1.1" fill="#d0f4ff"/>
<path d="M8.5 10.6h5v2.6h-5z" fill="#eef2fa"/>
<path d="M8 10.3h5" stroke="#1a60b0" stroke-width="1"/>
<path d="M2.2 12.5C1 9.5 5 5.5 11 4.8" fill="none" stroke="#1a5aa8" stroke-width="1"/>
</svg>
<div class="t" style="left:25px;top:750px;font-size:11px;color:#000">Fullført</div>
<div class="a" style="left:959px;top:745px;width:1px;height:19px;background:#d4d0c0;box-shadow:1px 0 0 #fff"></div>
<div class="a" style="left:984px;top:745px;width:1px;height:19px;background:#d4d0c0;box-shadow:1px 0 0 #fff"></div>
<div class="a" style="left:1008px;top:745px;width:1px;height:19px;background:#d4d0c0;box-shadow:1px 0 0 #fff"></div>
<div class="a" style="left:1032px;top:745px;width:1px;height:19px;background:#d4d0c0;box-shadow:1px 0 0 #fff"></div>
<div class="a" style="left:1056px;top:745px;width:1px;height:19px;background:#d4d0c0;box-shadow:1px 0 0 #fff"></div>
<div class="a" style="left:1080px;top:745px;width:1px;height:19px;background:#d4d0c0;box-shadow:1px 0 0 #fff"></div>
<svg class="a" style="left:1085px;top:747px" width="15" height="15" viewBox="0 0 15 15">
<circle cx="7.5" cy="7.5" r="6.8" fill="#2a6ab8"/><path d="M3 3c2 0 3 2 2 4s1 3 0 5c-2-1-4-4-2-9zM8 2c3 1 5 3 5 6-1 1-3 0-3-2s-2-2-2-4z" fill="#30a030"/>
</svg>
<div class="t" style="left:1104px;top:750px;font-size:11px;color:#000;letter-spacing:0.4px">Internett</div>
<svg class="a" style="left:1252px;top:752px" width="13" height="13"><g fill="#c0bcaa"><rect x="9" y="1" width="2" height="2"/><rect x="6" y="4" width="2" height="2"/><rect x="9" y="4" width="2" height="2"/><rect x="3" y="7" width="2" height="2"/><rect x="6" y="7" width="2" height="2"/><rect x="9" y="7" width="2" height="2"/></g></svg>
</div>


<div id="taskbar">
<div class="a" style="left:0;top:770px;width:1280px;height:30px;background:linear-gradient(#3168d5 0,#4993e6 1px,#2f71e3 3px,#245edb 6px,#245ddb 80%,#1941a5 100%)"></div>
<!-- start -->
<div class="a" style="left:0;top:770px;width:98px;height:30px;border-radius:0 11px 11px 0/0 15px 15px 0;background:linear-gradient(#3c963c 0,#6cc46c 2px,#40a840 5px,#389c38 60%,#2c842c 90%,#306e30 100%);box-shadow:inset -2px 0 3px rgba(20,60,20,.5)"></div>
<svg class="a" style="left:10px;top:776px" width="19" height="18" viewBox="0 0 19 18">
<path d="M3.5 1.5c2-1 4-1 6 0L8.2 8c-2-1-4-1-6 0z" fill="#f06030"/>
<path d="M10.3 1.8c2 1 4 1 6.2 0L15.2 8.2c-2.2 1-4.2 1-6.2 0z" fill="#70c030"/>
<path d="M2 9.2c2-1 4-1 6 0L6.8 15.8c-2-1-4-1-6 0z" fill="#3a8ae0"/>
<path d="M8.8 9.4c2 1 4 1 6.2 0L13.8 16c-2.2 1-4.2 1-6.2 0z" fill="#f8c010"/>
</svg>
<div class="t" style="left:34.5px;top:774.2px;font-size:17.5px;font-weight:bold;font-style:italic;color:#fff;text-shadow:1px 1px 1px #1a4a1a">Start</div>
<!-- quick launch -->
<svg class="a" style="left:111px;top:777px" width="16" height="16" viewBox="0 0 16 16"><circle cx="8" cy="8" r="7.3" fill="#fff"/><circle cx="8" cy="8" r="6" fill="#b02010"/><path d="M3 10c1-4 3-2 4-6 1 2 2 1 3 4 1-1 2 0 3 2-1 3-3 4-5 4s-4-1-5-4z" fill="#f8b020"/></svg>
<svg class="a" style="left:134px;top:777px" width="16" height="16" viewBox="0 0 16 16"><ellipse cx="8" cy="9" rx="5.5" ry="4.8" fill="none" stroke="#60b0f8" stroke-width="2.4"/><path d="M3 9.2h9" stroke="#60b0f8" stroke-width="2"/><path d="M1 14c3 2 10-4 14-12" fill="none" stroke="#80c8ff" stroke-width="1.2"/></svg>
<svg class="a" style="left:157px;top:777px" width="16" height="16" viewBox="0 0 16 16"><rect x="1" y="2" width="13" height="13" rx="3" fill="#e8f0ff" stroke="#2040a0" stroke-width="1.2"/><path d="M4 8l6-5 2 2-6 5z" fill="#4060c0"/><path d="M11 1l4 4-2 1z" fill="#f0a030"/></svg>
<svg class="a" style="left:185px;top:777px" width="9" height="6"><path d="M1 1l2.5 2L1 5M5 1l2.5 2L5 5" fill="none" stroke="#c8dcff" stroke-width="1.2"/></svg>
<div class="a" style="left:201px;top:774px;width:122px;height:23px;border-radius:3px;background:linear-gradient(#5a9af8 0,#3c81f3 4px,#3a7cf0 60%,#2f6ee8);box-shadow:inset 1px 1px 0 #6aa2fa"></div>
<svg class="a" style="left:211px;top:778px" width="14" height="16" viewBox="0 0 14 16"><path d="M7 1l6 2v5c0 4-3 6-6 7-3-1-6-3-6-7V3z" fill="#e06020" stroke="#404040" stroke-width="0.8"/><path d="M7 2v6h5.5V3.5z" fill="#40a040"/><path d="M7 8v6.5c2.5-1 5-3 5.5-6.5z" fill="#f8c010"/><path d="M1.5 8c.5 3.5 3 5.5 5.5 6.5V8z" fill="#3080e0"/></svg>
<div class="t" style="left:229px;top:779.5px;font-size:11px;color:#fff;text-shadow:0 0 1px rgba(0,0,40,.2)">Sikkerhetssenter</div><div class="a" style="left:326px;top:774px;width:122px;height:23px;border-radius:3px;background:linear-gradient(#5a9af8 0,#3c81f3 4px,#3a7cf0 60%,#2f6ee8);box-shadow:inset 1px 1px 0 #6aa2fa"></div>
<svg class="a" style="left:336px;top:778px" width="16" height="16" viewBox="0 0 16 16"><circle cx="8" cy="8" r="7" fill="#f08020"/><path d="M8 1a7 7 0 0 1 7 7h-7z" fill="#40a030"/><path d="M1 8a7 7 0 0 0 7 7V8z" fill="#3070d0"/><circle cx="8" cy="8" r="4.5" fill="#fff"/><path d="M6 5l5 3-5 3z" fill="#303030"/></svg>
<div class="t" style="left:354px;top:779.5px;font-size:11px;color:#fff;text-shadow:0 0 1px rgba(0,0,40,.2)">Windows Medi...</div><div class="a" style="left:451px;top:774px;width:122px;height:23px;border-radius:3px;background:linear-gradient(#5a9af8 0,#3c81f3 4px,#3a7cf0 60%,#2f6ee8);box-shadow:inset 1px 1px 0 #6aa2fa"></div>
<svg class="a" style="left:461px;top:778px" width="16" height="16" viewBox="0 0 16 16"><circle cx="8" cy="8" r="7" fill="#e8e8a0" stroke="#a0a060" stroke-width="0.8"/><circle cx="9" cy="8" r="4" fill="#607020"/><circle cx="10" cy="8" r="2" fill="#202010"/></svg>
<div class="t" style="left:479px;top:779.5px;font-size:11px;color:#fff;text-shadow:0 0 1px rgba(0,0,40,.2)">DC++ 0.668 -...</div><div class="a" style="left:576px;top:774px;width:122px;height:23px;border-radius:3px;background:linear-gradient(#5a9af8 0,#3c81f3 4px,#3a7cf0 60%,#2f6ee8);box-shadow:inset 1px 1px 0 #6aa2fa"></div>
<svg class="a" style="left:586px;top:778px" width="16" height="16" viewBox="0 0 16 16">
<path d="M5.5 2.5h7l2.5 2.5v10.5h-9.5z" fill="#606878" opacity=".5"/>
<path d="M4.5 1.5h7l2.5 2.5v10.5h-9.5z" fill="#eef2fa" stroke="#5a6880" stroke-width="0.9"/>
<circle cx="8" cy="10" r="4.6" fill="#2a7ccc"/>
<ellipse cx="8.3" cy="8.7" rx="2.3" ry="1.1" fill="#d0f4ff"/>
<path d="M8.5 10.6h5v2.6h-5z" fill="#eef2fa"/>
<path d="M8 10.3h5" stroke="#1a60b0" stroke-width="1"/>
<path d="M2.2 12.5C1 9.5 5 5.5 11 4.8" fill="none" stroke="#1a5aa8" stroke-width="1"/>
</svg>
<div class="t" style="left:604px;top:779.5px;font-size:11px;color:#fff;text-shadow:0 0 1px rgba(0,0,40,.2)">Forum.overklo...</div><div class="a" style="left:701px;top:774px;width:122px;height:23px;border-radius:3px;background:linear-gradient(#5a9af8 0,#3c81f3 4px,#3a7cf0 60%,#2f6ee8);box-shadow:inset 1px 1px 0 #6aa2fa"></div>
<svg class="a" style="left:711px;top:778px" width="16" height="16" viewBox="0 0 16 16">
<path d="M5.5 2.5h7l2.5 2.5v10.5h-9.5z" fill="#606878" opacity=".5"/>
<path d="M4.5 1.5h7l2.5 2.5v10.5h-9.5z" fill="#eef2fa" stroke="#5a6880" stroke-width="0.9"/>
<circle cx="8" cy="10" r="4.6" fill="#2a7ccc"/>
<ellipse cx="8.3" cy="8.7" rx="2.3" ry="1.1" fill="#d0f4ff"/>
<path d="M8.5 10.6h5v2.6h-5z" fill="#eef2fa"/>
<path d="M8 10.3h5" stroke="#1a60b0" stroke-width="1"/>
<path d="M2.2 12.5C1 9.5 5 5.5 11 4.8" fill="none" stroke="#1a5aa8" stroke-width="1"/>
</svg>
<div class="t" style="left:729px;top:779.5px;font-size:11px;color:#fff;text-shadow:0 0 1px rgba(0,0,40,.2)">Port Forwardi...</div><div class="a" style="left:828.5px;top:774px;width:125px;height:23px;border-radius:3px;background:linear-gradient(#1e52c0,#1a48b0 50%,#1e4fb8);box-shadow:inset 1px 1px 0 #17398f"></div>
<svg class="a" style="left:839px;top:778px" width="16" height="16" viewBox="0 0 16 16">
<path d="M5.5 2.5h7l2.5 2.5v10.5h-9.5z" fill="#606878" opacity=".5"/>
<path d="M4.5 1.5h7l2.5 2.5v10.5h-9.5z" fill="#eef2fa" stroke="#5a6880" stroke-width="0.9"/>
<circle cx="8" cy="10" r="4.6" fill="#2a7ccc"/>
<ellipse cx="8.3" cy="8.7" rx="2.3" ry="1.1" fill="#d0f4ff"/>
<path d="M8.5 10.6h5v2.6h-5z" fill="#eef2fa"/>
<path d="M8 10.3h5" stroke="#1a60b0" stroke-width="1"/>
<path d="M2.2 12.5C1 9.5 5 5.5 11 4.8" fill="none" stroke="#1a5aa8" stroke-width="1"/>
</svg>
<div class="t" style="left:857px;top:779.5px;font-size:11px;color:#fff;text-shadow:0 0 1px rgba(0,0,40,.2)">http://192.16...</div><div class="a" style="left:955px;top:774px;width:124px;height:23px;border-radius:3px;background:linear-gradient(#5a9af8 0,#3c81f3 4px,#3a7cf0 60%,#2f6ee8);box-shadow:inset 1px 1px 0 #6aa2fa"></div>
<svg class="a" style="left:965px;top:778px" width="17" height="17" viewBox="0 0 17 17"><circle cx="8.5" cy="8.5" r="8" fill="#101010"/><text x="2" y="12" font-size="9" font-family="Liberation Sans" fill="#30e030">MX</text></svg>
<div class="t" style="left:983px;top:779.5px;font-size:11px;color:#fff;text-shadow:0 0 1px rgba(0,0,40,.2)">WinMX v3.53 &nbsp;...</div>
<div class="a" style="left:1088px;top:777px;width:15px;height:18px;background:#2c5cc8"></div>
<div class="t" style="left:1087px;top:779px;font-size:11.5px;color:#fff;letter-spacing:-0.5px">NC</div>
<!-- tray -->
<div class="a" style="left:1115px;top:770px;width:165px;height:30px;background:linear-gradient(#1690ea 0,#24a8f4 2px,#0f97ef 6px,#0c8de8 80%,#0a78d0 100%);border-left:1px solid #1042a0"></div>
<div class="a" style="left:1106px;top:776px;width:18px;height:18px;border-radius:50%;background:radial-gradient(circle at 45% 35%,#c8e0ff,#6aa0e8 70%,#4a80d8);border:1px solid #a8c8f8"></div>
<svg class="a" style="left:1110px;top:780px" width="10" height="10"><path d="M6.5 1.5L3 5l3.5 3.5" fill="none" stroke="#fff" stroke-width="2.2"/></svg>
<svg class="a" style="left:1126px;top:777px" width="18" height="17" viewBox="0 0 18 17"><rect x="1" y="3" width="8" height="9" fill="#4a5aa0" stroke="#d0d8f0" stroke-width="0.8"/><rect x="6" y="1" width="8" height="9" fill="#3a4a90" stroke="#d0d8f0" stroke-width="0.8"/><path d="M9 10l6 6M15 10l-6 6" stroke="#e02020" stroke-width="2"/></svg>
<svg class="a" style="left:1147px;top:778px" width="15" height="16" viewBox="0 0 15 16"><path d="M2 14c3-5 4-9 5-12 1 3 2 7 6 12-3-1-7-1-11 0z" fill="none" stroke="#fff" stroke-width="1.3"/><path d="M7 9l6 6M13 9l-6 6" stroke="#e02020" stroke-width="2"/></svg>
<svg class="a" style="left:1164px;top:777px" width="14" height="16" viewBox="0 0 14 16"><path d="M7 1l6 2v5c0 4-3 6-6 7-3-1-6-3-6-7V3z" fill="#f8d820" stroke="#806000" stroke-width="0.8"/><path d="M6.2 4h1.6v5H6.2zM6.2 10.5h1.6v1.6H6.2z" fill="#202020"/></svg>
<svg class="a" style="left:1180px;top:776px" width="17" height="18" viewBox="0 0 17 18"><rect x="1" y="6" width="8" height="8" fill="#3a4a90" stroke="#d0d8f0" stroke-width="0.8"/><path d="M11 3a6 6 0 0 1 0 8M13 1a9 9 0 0 1 0 12" fill="none" stroke="#e0e8ff" stroke-width="1"/><path d="M8 11l6 6M14 11l-6 6" stroke="#e02020" stroke-width="2"/></svg>
<svg class="a" style="left:1198px;top:778px" width="17" height="14" viewBox="0 0 17 14"><path d="M1 13L6 1h10v12z" fill="#d01010" stroke="#fff" stroke-width="0.8"/><path d="M4 12l3-8h2l1 8zM10 4h5v2h-1.5v6h-2V6H10z" fill="#fff"/></svg>
<svg class="a" style="left:1218px;top:777px" width="13" height="16" viewBox="0 0 13 16"><path d="M6.5 1l5.5 2v5c0 4-3 6-5.5 7C4 14 1 12 1 8V3z" fill="#d82020" stroke="#fff" stroke-width="0.8"/><path d="M4.3 5.3l4.4 4.4M8.7 5.3l-4.4 4.4" stroke="#fff" stroke-width="1.6"/></svg>
<div class="t" style="left:1238px;top:779px;font-size:11.5px;color:#fff">00:53</div>
</div>

<div class="a" style="left:1267px;top:30px;width:2px;height:736px;background:#e2e6ee"></div><div class="a" style="left:1269px;top:30px;width:4px;height:740px;background:linear-gradient(90deg,#0a3ed8,#0030c0 60%,#001c90)"></div>
</body></html>
